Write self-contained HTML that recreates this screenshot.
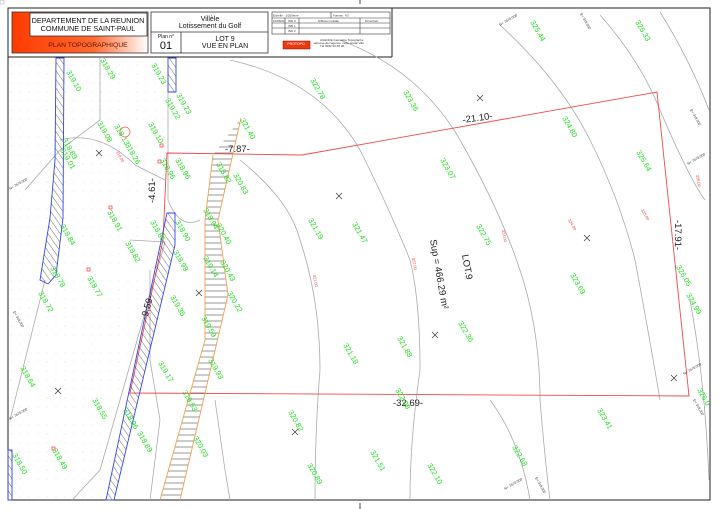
<!DOCTYPE html>
<html><head><meta charset="utf-8"><style>
html,body{margin:0;padding:0;background:#fff;width:719px;height:509px;overflow:hidden}
svg{display:block}
.g{fill:#22dd22;font:7.5px "Liberation Sans",sans-serif}
.r{fill:#f04040;font:4px "Liberation Sans",sans-serif}
.k{fill:#222;font:9.5px "Liberation Sans",sans-serif}
.s{fill:#333;font:3.5px "Liberation Sans",sans-serif}
</style></head><body>
<svg width="719" height="509" viewBox="0 0 719 509" xmlns="http://www.w3.org/2000/svg">
<defs>
<pattern id="hb" width="5" height="5" patternUnits="userSpaceOnUse" patternTransform="rotate(-35)"><line x1="0" y1="0" x2="0" y2="5" stroke="#333" stroke-width="0.7"/></pattern>
<pattern id="ho" width="6" height="6" patternUnits="userSpaceOnUse"><line x1="0" y1="3" x2="6" y2="3" stroke="#555" stroke-width="0.6"/></pattern>
<pattern id="dots" width="9" height="9" patternUnits="userSpaceOnUse"><circle cx="2" cy="2" r="0.4" fill="#bbb"/></pattern>
<linearGradient id="og" x1="0" x2="1"><stop offset="0" stop-color="#ff3a00"/><stop offset="0.6" stop-color="#ff6a30"/><stop offset="1" stop-color="#fff"/></linearGradient>
</defs>
<!-- frame -->
<rect x="8" y="8" width="702" height="492" fill="none" stroke="#222" stroke-width="1"/>
<line x1="8" y1="57" x2="392" y2="57" stroke="#222"/>
<line x1="392" y1="8" x2="392" y2="57" stroke="#222"/>
<line x1="360" y1="0" x2="360" y2="4" stroke="#444"/>
<line x1="360" y1="503" x2="360" y2="509" stroke="#444"/>
<rect x="0" y="0" width="4" height="4" fill="none" stroke="#999" stroke-width="0.5"/>
<!-- dotted area -->
<polygon points="9,58 165,58 175,145 130,390 105,500 9,500" fill="url(#dots)"/>
<!-- contours -->
<g fill="none" stroke="#aaa" stroke-width="0.8">
<path d="M230,60 Q320,80 360,150 Q390,210 410,260 Q420,300 420,370 Q410,440 410,500"/>
<path d="M340,40 Q420,70 460,140 Q500,210 520,270 Q540,330 540,400 Q545,460 550,500"/>
<path d="M500,25 Q560,80 590,140 Q620,200 635,260 Q650,340 660,400"/>
<path d="M600,15 Q640,60 660,110 Q690,180 705,200"/>
<path d="M660,12 Q690,60 709,110"/>
<path d="M240,160 Q290,200 300,240 Q320,300 320,370 Q315,430 315,500"/>
<path d="M490,400 Q520,440 530,500"/>
<path d="M690,300 Q705,380 709,480"/>
<path d="M100,58 L100,120 L60,150 L25,190"/>
<path d="M60,140 Q100,130 135,165 L165,180"/>
<path d="M130,240 L165,242 L140,330 L100,470 L72,500"/>
<path d="M45,280 L20,380 L10,420"/>
<path d="M168,60 L168,200 Q180,230 200,220"/>
<path d="M150,270 L150,360 L160,420 L150,500"/>
<path d="M215,400 L225,470 L230,500"/>
</g>
<!-- lot polygon -->
<polyline points="167,153 302,155 657,92 689,396 130,393 163,240 167,153" fill="none" stroke="#f04a4a" stroke-width="0.9"/>
<!-- blue strips -->
<g stroke="#3344ee" stroke-width="0.9" fill="url(#hb)">
<polygon points="56,58 64,58 63,218 56,275 48,284 40,280 50,218 55,160"/>
<polygon points="167,213 175,213 175,245 114,500 106,500 160,246"/>
<polygon points="168,58 176,58 176,92 168,92"/>
<polygon points="8,450 12,450 12,500 8,500"/>
</g>
<!-- orange strip -->
<g>
<polygon points="213,155 241,118 218,220 228,295 180,500 160,500 205,340 205,220" fill="url(#ho)" stroke="none"/>
<polyline points="213,155 205,220 205,340 160,500" fill="none" stroke="#f0a050" stroke-width="0.9"/>
<polyline points="241,118 218,220 228,295 180,500" fill="none" stroke="#f0a050" stroke-width="0.9"/>
</g>
<!-- markers -->
<g stroke="#333" stroke-width="0.7">
<path d="M96,150l6,6M102,150l-6,6"/><path d="M55,388l6,6M61,388l-6,6"/>
<path d="M336,193l6,6M342,193l-6,6"/><path d="M477,95l6,6M483,95l-6,6"/>
<path d="M196,290l6,6M202,290l-6,6"/><path d="M432,332l6,6M438,332l-6,6"/>
<path d="M292,429l6,6M298,429l-6,6"/><path d="M671,375l6,6M677,375l-6,6"/>
<path d="M584,235l6,6M590,235l-6,6"/>
</g>
<circle cx="125" cy="132" r="5" fill="none" stroke="#f05050" stroke-width="0.7"/>
<g fill="none" stroke="#f05050" stroke-width="0.8"><rect x="160" y="144" width="3" height="3"/><rect x="158" y="160" width="3" height="3"/><rect x="109" y="206" width="3" height="3"/><rect x="87" y="268" width="3" height="3"/><rect x="52" y="447" width="3" height="3"/></g>
<!-- dimension labels -->
<text class="k" x="225" y="152">-7.87-</text>
<text class="k" x="463" y="123" transform="rotate(-8 463 123)">-21.10-</text>
<text class="k" x="393" y="406">-32.69-</text>
<text class="k" transform="translate(155,203) rotate(-90)">-4.61-</text>
<text class="k" transform="translate(147,320) rotate(-75)">-9.59-</text>
<text class="k" transform="translate(675,220) rotate(90)">-17.91-</text>
<text class="k" transform="translate(430,240) rotate(80)">Sup = 466.29 m²</text>
<text class="k" transform="translate(462,255) rotate(80)">LOT.9</text>
<!-- green spot heights -->
<g class="g">
<text transform="translate(66,72) rotate(60)">319.10</text>
<text transform="translate(100,60) rotate(60)">318.29</text>
<text transform="translate(151,65) rotate(60)">319.23</text>
<text transform="translate(176,95) rotate(60)">319.23</text>
<text transform="translate(165,100) rotate(60)">319.22</text>
<text transform="translate(97,123) rotate(60)">319.08</text>
<text transform="translate(114,126) rotate(60)">318.13</text>
<text transform="translate(125,145) rotate(60)">318.26</text>
<text transform="translate(148,124) rotate(60)">319.10</text>
<text transform="translate(62,140) rotate(60)">318.89</text>
<text transform="translate(60,150) rotate(60)">319.01</text>
<text transform="translate(160,160) rotate(60)">318.96</text>
<text transform="translate(175,160) rotate(60)">318.96</text>
<text transform="translate(107,212) rotate(60)">318.91</text>
<text transform="translate(60,226) rotate(60)">318.84</text>
<text transform="translate(125,243) rotate(60)">318.82</text>
<text transform="translate(150,222) rotate(60)">318.86</text>
<text transform="translate(175,222) rotate(60)">318.90</text>
<text transform="translate(173,252) rotate(60)">318.99</text>
<text transform="translate(87,278) rotate(60)">318.77</text>
<text transform="translate(50,268) rotate(60)">318.78</text>
<text transform="translate(38,293) rotate(60)">318.72</text>
<text transform="translate(170,297) rotate(60)">319.35</text>
<text transform="translate(158,363) rotate(60)">319.17</text>
<text transform="translate(20,368) rotate(60)">318.64</text>
<text transform="translate(92,400) rotate(60)">318.55</text>
<text transform="translate(123,410) rotate(60)">318.96</text>
<text transform="translate(137,433) rotate(60)">318.89</text>
<text transform="translate(52,450) rotate(60)">318.49</text>
<text transform="translate(12,455) rotate(60)">318.50</text>
<text transform="translate(240,120) rotate(60)">321.40</text>
<text transform="translate(216,164) rotate(60)">318.82</text>
<text transform="translate(233,175) rotate(60)">320.83</text>
<text transform="translate(203,210) rotate(60)">318.94</text>
<text transform="translate(216,225) rotate(60)">320.40</text>
<text transform="translate(203,258) rotate(60)">319.14</text>
<text transform="translate(220,262) rotate(60)">320.43</text>
<text transform="translate(227,293) rotate(60)">320.22</text>
<text transform="translate(201,318) rotate(60)">319.59</text>
<text transform="translate(208,360) rotate(60)">319.93</text>
<text transform="translate(182,392) rotate(60)">319.53</text>
<text transform="translate(193,438) rotate(60)">320.03</text>
<text transform="translate(310,80) rotate(60)">322.78</text>
<text transform="translate(308,220) rotate(60)">321.19</text>
<text transform="translate(352,224) rotate(60)">321.47</text>
<text transform="translate(343,345) rotate(60)">321.18</text>
<text transform="translate(397,338) rotate(60)">321.88</text>
<text transform="translate(395,390) rotate(60)">322.08</text>
<text transform="translate(288,412) rotate(60)">320.82</text>
<text transform="translate(307,465) rotate(60)">320.89</text>
<text transform="translate(370,452) rotate(60)">321.51</text>
<text transform="translate(427,465) rotate(60)">322.10</text>
<text transform="translate(403,92) rotate(60)">323.36</text>
<text transform="translate(440,160) rotate(60)">323.07</text>
<text transform="translate(476,226) rotate(60)">322.75</text>
<text transform="translate(458,323) rotate(60)">322.36</text>
<text transform="translate(530,22) rotate(60)">325.44</text>
<text transform="translate(562,118) rotate(60)">324.80</text>
<text transform="translate(570,275) rotate(60)">323.69</text>
<text transform="translate(597,410) rotate(60)">323.41</text>
<text transform="translate(512,447) rotate(60)">322.68</text>
<text transform="translate(636,152) rotate(60)">325.64</text>
<text transform="translate(676,267) rotate(60)">326.05</text>
<text transform="translate(686,295) rotate(60)">324.99</text>
<text transform="translate(697,390) rotate(60)">325.0</text>
<text transform="translate(635,22) rotate(60)">325.33</text>
</g>
<g class="r">
<text transform="translate(116,152) rotate(60)">319.00</text>
<text transform="translate(313,275) rotate(80)">321.00</text>
<text transform="translate(412,258) rotate(80)">322.00</text>
<text transform="translate(502,230) rotate(80)">323.00</text>
<text transform="translate(568,220) rotate(60)">324.00</text>
<text transform="translate(641,210) rotate(60)">325.00</text>
<text transform="translate(696,175) rotate(80)">326.00</text>
</g>
<g class="s">
<text transform="translate(10,190) rotate(-30)">N= 7670.000</text>
<text transform="translate(13,312) rotate(60)">E= 318.000</text>
<text transform="translate(10,420) rotate(-30)">N= 7670.000</text>
<text transform="translate(580,14) rotate(60)">E= 318.000</text>
<text transform="translate(500,26) rotate(-30)">N= 7670.000</text>
<text transform="translate(690,110) rotate(60)">E= 318.000</text>
<text transform="translate(688,165) rotate(-30)">N= 7670.000</text>
<text transform="translate(684,375) rotate(-30)">N= 7670.000</text>
<text transform="translate(693,400) rotate(60)">E= 318.000</text>
<text transform="translate(505,490) rotate(-30)">N= 7670.000</text>
<text transform="translate(535,478) rotate(60)">E= 318.000</text>
</g>
<!-- title block -->
<rect x="12" y="12" width="136" height="41" fill="url(#og)" stroke="#333" stroke-width="0.8"/>
<rect x="30" y="13" width="117" height="23" fill="#fff" stroke="#333" stroke-width="0.8"/>
<rect x="30" y="36" width="117" height="0" stroke="#333"/>
<g font-family="Liberation Sans,sans-serif" fill="#111" text-anchor="middle">
<text x="88" y="23" font-size="7.3">DEPARTEMENT DE LA REUNION</text>
<text x="88" y="31" font-size="7.3">COMMUNE DE SAINT-PAUL</text>
<text x="88" y="47" font-size="6.8" fill="#5a1500">PLAN TOPOGRAPHIQUE</text>
</g>
<rect x="151" y="12" width="117" height="41" fill="#fff" stroke="#333" stroke-width="0.8"/>
<line x1="151" y1="32" x2="268" y2="32" stroke="#333" stroke-width="0.8"/>
<line x1="181" y1="32" x2="181" y2="53" stroke="#333" stroke-width="0.8"/>
<g font-family="Liberation Sans,sans-serif" fill="#111" text-anchor="middle">
<text x="210" y="21" font-size="7">Villèle</text>
<text x="210" y="28" font-size="7">Lotissement du Golf</text>
<text x="166" y="38" font-size="5">Plan n°</text>
<text x="166" y="49" font-size="11">01</text>
<text x="225" y="41" font-size="7">LOT 9</text>
<text x="225" y="48" font-size="7">VUE EN PLAN</text>
</g>
<g stroke="#333" stroke-width="0.6" fill="none">
<rect x="272" y="12" width="118" height="22"/>
<line x1="272" y1="18" x2="390" y2="18"/><line x1="272" y1="23" x2="390" y2="23"/><line x1="272" y1="28" x2="390" y2="28"/>
<line x1="285" y1="18" x2="285" y2="34"/><line x1="299" y1="18" x2="299" y2="34"/><line x1="360" y1="18" x2="360" y2="34"/><line x1="331" y1="12" x2="331" y2="18"/>
</g>
<g font-family="Liberation Sans,sans-serif" font-size="3" fill="#333">
<text x="273" y="16.5">Echelle : 1/200ème</text><text x="333" y="16.5">Format : A3</text>
<text x="273" y="22">10/08/21</text><text x="288" y="22">IND 0</text><text x="318" y="22">Diffusion initiale</text><text x="365" y="22">M.Corbeil</text>
<text x="288" y="27">IND 1</text><text x="288" y="32">IND 2</text>
<text x="320" y="41">AGENCE Géomètre Topographe</text>
<text x="314" y="44">adresse de l'agence, code postal ville</text>
<text x="320" y="47">Tél 0262 00 00 00</text>
</g>
<rect x="283" y="41" width="27" height="8" fill="#e83a10" stroke="#900" stroke-width="0.5"/>
<text x="296" y="45" font-family="Liberation Sans,sans-serif" font-size="3.5" fill="#fff" text-anchor="middle">PROTOPO</text>
</svg>
</body></html>
